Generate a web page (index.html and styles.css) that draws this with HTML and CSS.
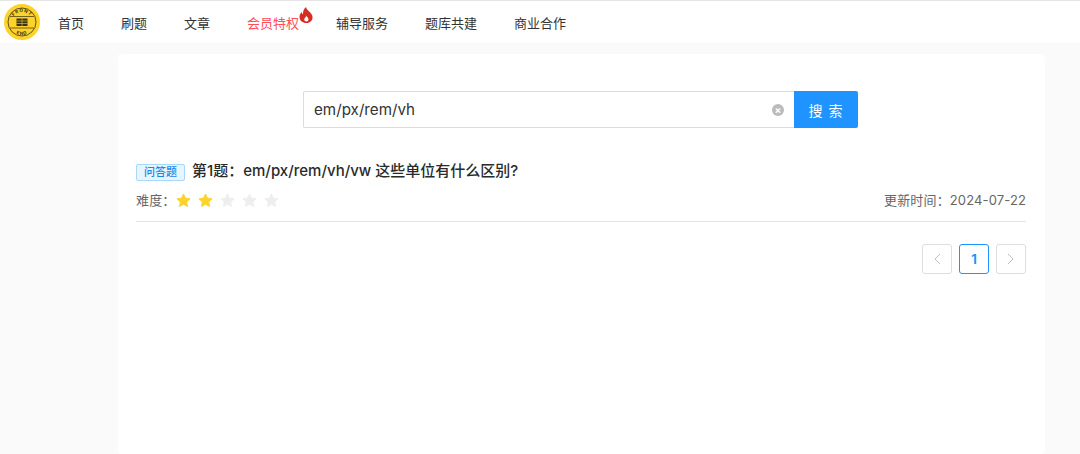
FILE: index.html
```html
<!DOCTYPE html>
<html lang="zh-CN">
<head>
  <meta charset="utf-8">
  <meta name="viewport" content="width=device-width, initial-scale=1.0">
  <title>搜索</title>
  <link rel="stylesheet" href="styles.css">
</head>

<body>
  <header class="topbar">
    <svg class="logo" width="36" height="36" viewBox="0 0 36 36" aria-label="logo">
      <defs>
        <path id="arcTop" d="M8 18a10 10 0 0 1 20 0"/>
        <path id="arcBottom" d="M5 18a13 13 0 0 0 26 0"/>
      </defs>
      <circle cx="18" cy="18" r="18" fill="#fdd22b"/>
      <circle cx="18" cy="18" r="14" fill="none" stroke="#3a3212" stroke-width=".8"/>
      <text class="logo-text"><textPath href="#arcTop" startOffset="50%" text-anchor="middle">FRONT</textPath></text>
      <text class="logo-text"><textPath href="#arcBottom" startOffset="50%" text-anchor="middle">END</textPath></text>
      <path d="M6 12.500h24M6 24h24" stroke="#3a3212" stroke-width=".7"/>
      <rect x="12.500" y="14.500" width="11" height="7.500" fill="#3a3212"/>
      <path d="M12.500 17h11M12.500 19.500h11M18 14.500v7.500" stroke="#fdd22b" stroke-width=".6"/>
    </svg>
    <nav class="nav">
      <a href="#">首页</a>
      <a href="#">刷题</a>
      <a href="#">文章</a>
      <a href="#" class="vip">会员特权
        <svg class="fire" width="14" height="16" viewBox="0 0 14 16">
          <path fill-rule="evenodd" fill="#d62f22" d="M7 0c.3 2.400 2.200 3.300 4 5.300 1.800 2 2.800 3.600 2.500 5.900C13.100 14 10.500 16 7.300 16 3.500 16 .5 13.600.5 10c0-2.200 1-3.800 2.300-5 .1 1.200.5 1.900 1.200 2.300C3.900 4.700 4.700 1.800 7 0zM7.500 8.800c-.4 1.300-2.300 2-2.300 3.800 0 1.100.9 1.900 2.100 1.900s2.200-.8 2.200-2c0-1.600-1.400-2.200-2-3.700z"/>
        </svg>
      </a>
      <a href="#">辅导服务</a>
      <a href="#">题库共建</a>
      <a href="#">商业合作</a>
    </nav>
  </header>

  <main class="card">
    <form class="search">
      <div class="search-box">
        <span class="search-value">em/px/rem/vh</span>
        <span class="clear">×</span>
      </div>
      <button class="search-btn" type="button">搜 索</button>
    </form>

    <section class="question">
      <div class="question-title">
        <span class="tag">问答题</span>
        <h3>第1题：em/px/rem/vh/vw 这些单位有什么区别?</h3>
      </div>
      <div class="question-meta">
        <div class="level">
          <span>难度：</span>
          <svg class="star on" viewBox="0 0 16 16"><path d="M8 1l2.100 4.500 4.900.6-3.600 3.400.9 4.900L8 12l-4.300 2.400.9-4.900L1 6.100l4.900-.6z"/></svg>
          <svg class="star on" viewBox="0 0 16 16"><path d="M8 1l2.100 4.500 4.900.6-3.600 3.400.9 4.900L8 12l-4.300 2.400.9-4.900L1 6.100l4.900-.6z"/></svg>
          <svg class="star" viewBox="0 0 16 16"><path d="M8 1l2.100 4.500 4.900.6-3.600 3.400.9 4.900L8 12l-4.300 2.400.9-4.900L1 6.100l4.900-.6z"/></svg>
          <svg class="star" viewBox="0 0 16 16"><path d="M8 1l2.100 4.500 4.900.6-3.600 3.400.9 4.900L8 12l-4.300 2.400.9-4.900L1 6.100l4.900-.6z"/></svg>
          <svg class="star" viewBox="0 0 16 16"><path d="M8 1l2.100 4.500 4.900.6-3.600 3.400.9 4.900L8 12l-4.300 2.400.9-4.900L1 6.100l4.900-.6z"/></svg>
        </div>
        <span>更新时间：2024-07-22</span>
      </div>
    </section>

    <div class="pager">
      <a href="#" class="page"><svg width="8" height="12" viewBox="0 0 8 12"><path d="M7 1L2 6l5 5" fill="none" stroke="#bfbfbf"/></svg></a>
      <a href="#" class="page active">1</a>
      <a href="#" class="page"><svg width="8" height="12" viewBox="0 0 8 12"><path d="M1 1l5 5-5 5" fill="none" stroke="#bfbfbf"/></svg></a>
    </div>
  </main>
</body>
</html>
```

FILE: styles.css
```css
:root {
  --primary-color: #1f93ff;
  --text-color: #333;
  --muted-color: #666;
  --border-color: #e4e4e4;
}

html, body {
  height: 100%;
}

body {
  margin: 0;
  overflow: hidden;
  font-family: Inter, "Noto Sans CJK SC", sans-serif;
  color: var(--text-color);
  background-color: #fafafa;
}

a {
  color: inherit;
  text-decoration: none;
}

.topbar {
  display: flex;
  align-items: center;
  height: 43px;
  padding-left: 4px;
  box-sizing: border-box;
  background: white;
  border-top: 1px solid #e6e6e6;
}

.logo-text {
  font-size: 4.500px;
  font-weight: bold;
  letter-spacing: .8px;
  fill: #3a3212;
}

.nav {
  display: flex;
  gap: 37px;
  margin-left: 18px;
  font-size: 13px;
}

.vip {
  position: relative;
  color: #ff4d5a;
}

.fire {
  position: absolute;
  top: -6px;
  right: -14px;
}

.card {
  width: 927px;
  height: 400px;
  margin: 11px 0 0 118px;
  padding: 37px 19px 0 18px;
  box-sizing: border-box;
  background: white;
  border-radius: 4px;
}

.search {
  display: flex;
  width: 555px;
  height: 37px;
  margin: 0 0 34px 167px;
}

.search-box {
  flex: 1;
  display: flex;
  align-items: center;
  justify-content: space-between;
  padding: 0 10px;
  border: 1px solid #dcdcdc;
  border-right: none;
  border-radius: 2px 0 0 2px;
  font-size: 15.200px;
}

.clear {
  width: 12px;
  height: 12px;
  border-radius: 50%;
  background: #bbb;
  color: white;
  font-size: 10px;
  font-weight: bold;
  line-height: 12px;
  text-align: center;
}

.search-btn {
  width: 64px;
  padding: 0;
  border: none;
  border-radius: 0 2px 2px 0;
  background: var(--primary-color);
  color: white;
  font-family: inherit;
  font-size: 14px;
  letter-spacing: 1px;
}

.question {
  padding-bottom: 12px;
  border-bottom: 1px solid var(--border-color);
}

.question-title {
  display: flex;
  align-items: center;
  gap: 7px;
}

.question-title h3 {
  margin: 0 0 2px;
  font-size: 15px;
  font-weight: 500;
  line-height: 17px;
  color: #2a2a2a;
}

.tag {
  width: 47px;
  height: 15px;
  margin-top: 2px;
  border: 1px solid #a6d8fb;
  border-radius: 2px;
  background: #e6f5ff;
  color: #1b86e8;
  font-size: 11px;
  font-weight: 500;
  line-height: 15px;
  text-align: center;
}

.question-meta {
  display: flex;
  justify-content: space-between;
  align-items: center;
  margin-top: 10px;
  font-size: 13px;
  line-height: 18px;
  color: var(--muted-color);
  letter-spacing: .13px;
}

.level {
  display: flex;
  align-items: center;
  gap: 7px;
}

.level span {
  flex: none;
  margin-right: -6px;
  width: 39px;
  white-space: nowrap;
}

.star {
  width: 15px;
  height: 15px;
  fill: #eeeeee;
  stroke: #eeeeee;
  stroke-width: 1;
  stroke-linejoin: round;
}

.star.on {
  fill: #fdd22b;
  stroke: #fdd22b;
}

.pager {
  display: flex;
  justify-content: flex-end;
  gap: 7px;
  margin-top: 22px;
}

.page {
  display: flex;
  align-items: center;
  justify-content: center;
  width: 30px;
  height: 30px;
  box-sizing: border-box;
  border: 1px solid #dedede;
  border-radius: 3px;
}

.page.active {
  border-color: var(--primary-color);
  color: var(--primary-color);
  font-size: 13px;
  font-weight: bold;
}
```
